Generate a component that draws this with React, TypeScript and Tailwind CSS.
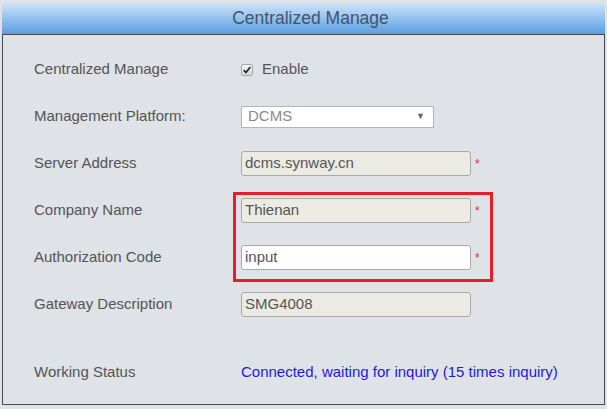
const font = { fontFamily: '"Liberation Sans", Arial, sans-serif' };

type Field = { label: string; value: string; required?: boolean; editable?: boolean };

const fields: Field[] = [
  { label: "Server Address", value: "dcms.synway.cn", required: true },
  { label: "Company Name", value: "Thienan", required: true },
  { label: "Authorization Code", value: "input", required: true, editable: true },
  { label: "Gateway Description", value: "SMG4008" },
];

const Row = ({ label, children }: { label: string; children: React.ReactNode }) => (
  <div className="flex h-[47px] items-center">
    <div className="w-[207px] text-[15px] text-[#555]">{label}</div>
    <div className="flex items-center">{children}</div>
  </div>
);

const TextBox = ({ value, required, editable }: Field) => (
  <>
    <div
      className={
        "flex h-[25px] w-[230px] items-center rounded-[3px] border border-[#a9a9a9] px-[3px] text-[15px] text-[#555] " +
        (editable ? "bg-white" : "bg-[#ebebe4]")
      }
    >
      {value}
    </div>
    {required && <span className="ml-[4px] text-[12px] leading-none text-[#e0284a]">*</span>}
  </>
);

export default function App() {
  return (
    <div className="h-[409px] w-[607px] bg-[#dfe2e6] pt-[3px]" style={font}>
      <div className="mx-[2px] flex h-[31px] items-center justify-center bg-gradient-to-b from-[#cfe4f8] via-[#92c1ee] to-[#5a9fe2] pl-[14px] text-[17.5px] text-[#44546a]">
        Centralized Manage
      </div>
      <div className="relative mx-[2px] h-[371px] border border-[#4a4a4a] bg-[#dfe2e6] pl-[31px] pt-[11px]">
        <Row label="Centralized Manage">
          <span className="flex h-[12px] w-[12px] items-center justify-center rounded-[2px] border border-[#a8a8a8] bg-gradient-to-b from-[#f4f4f4] to-[#d8d8d8]">
            <svg viewBox="0 0 12 12" className="h-[10px] w-[10px]">
              <path d="M2 6.2 L4.8 9 L10 2.5" fill="none" stroke="#222" strokeWidth="2" />
            </svg>
          </span>
          <span className="ml-[9px] text-[15px] text-[#555]">Enable</span>
        </Row>
        <Row label="Management Platform:">
          <div className="flex h-[22px] w-[193px] items-center justify-between border border-[#b5b5b5] bg-white pl-[6px] pr-[8px] text-[15px] text-[#8a8a8a]">
            <span>DCMS</span>
            <span className="text-[9px] text-[#666]">▼</span>
          </div>
        </Row>
        {fields.map((f) => (
          <Row key={f.label} label={f.label}>
            <TextBox {...f} />
          </Row>
        ))}
        <div className="h-[21px]" />
        <Row label="Working Status">
          <span className="text-[15px] text-[#1c1cd6]">Connected, waiting for inquiry (15 times inquiry)</span>
        </Row>
        {/* highlight around the company / authorization inputs */}
        <div className="absolute left-[230px] top-[157px] h-[90px] w-[260px] border-[3px] border-[#e3202a]" />
      </div>
    </div>
  );
}
